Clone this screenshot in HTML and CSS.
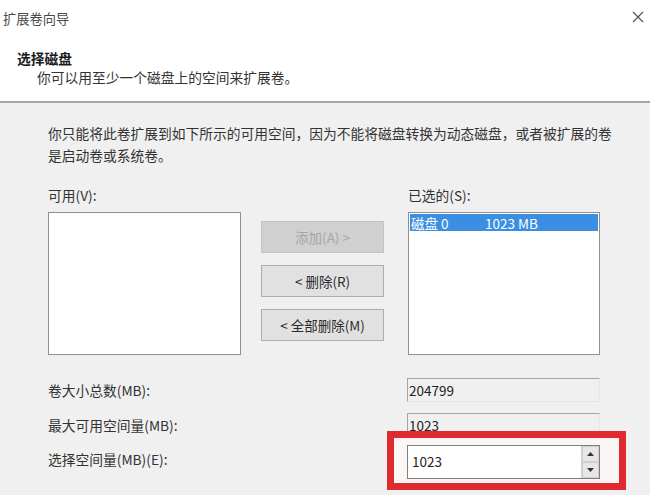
FILE: index.html
```html
<!DOCTYPE html>
<html lang="zh-CN">
<head>
<meta charset="utf-8">
<title>扩展卷向导</title>
<link rel="stylesheet" href="styles.css">
</head>
<body>
<div class="dialog">
  <div class="header">
    <div class="titlebar">
      <span class="title">扩展卷向导</span>
      <svg class="close" width="12" height="12" viewBox="0 0 12 12"><path d="M1 1 L11 11 M11 1 L1 11" stroke="#555" stroke-width="1.2" fill="none"/></svg>
    </div>
    <div class="heading">选择磁盘</div>
    <div class="subheading">你可以用至少一个磁盘上的空间来扩展卷。</div>
  </div>
  <div class="content">
    <p class="desc">你只能将此卷扩展到如下所示的可用空间，因为不能将磁盘转换为动态磁盘，或者被扩展的卷<br>是启动卷或系统卷。</p>
    <div class="lists">
      <div class="list-label">可用(V):</div>
      <div></div>
      <div class="list-label">已选的(S):</div>
      <div class="listbox"></div>
      <div class="buttons">
        <div class="btn disabled">添加(A) &gt;</div>
        <div class="btn">&lt; 删除(R)</div>
        <div class="btn">&lt; 全部删除(M)</div>
      </div>
      <div class="listbox">
        <div class="item selected"><span class="disk">磁盘 0</span><span class="size">1023 MB</span></div>
      </div>
    </div>
    <div class="fields">
      <div class="row">
        <span class="row-label">卷大小总数(MB):</span>
        <div class="ro-field">204799</div>
      </div>
      <div class="row">
        <span class="row-label">最大可用空间量(MB):</span>
        <div class="ro-field">1023</div>
      </div>
      <div class="row row-spin">
        <span class="row-label">选择空间量(MB)(E):</span>
        <div class="highlight">
          <div class="spin">
            <span class="spin-value">1023</span>
            <div class="spin-buttons">
              <div class="spin-btn"><svg width="7" height="4" viewBox="0 0 7 4"><path d="M0 4 L3.5 0 L7 4 Z" fill="#333"/></svg></div>
              <div class="spin-btn"><svg width="7" height="4" viewBox="0 0 7 4"><path d="M0 0 L3.5 4 L7 0 Z" fill="#333"/></svg></div>
            </div>
          </div>
        </div>
      </div>
    </div>
  </div>
</div>
</body>
</html>
```

FILE: styles.css
```css
* { box-sizing: border-box; }
html, body {
  margin: 0;
  padding: 0;
}
body {
  width: 650px;
  height: 495px;
  overflow: hidden;
  background: #f0f0f0;
  font-family: "Noto Sans CJK SC", "Liberation Sans", sans-serif;
  font-size: 13.75px;
  color: #2b2b2b;
}
.dialog {
  width: 650px;
  height: 495px;
  display: flex;
  flex-direction: column;
}
.header {
  background: #ffffff;
  height: 103px;
  border-bottom: 2px solid #a8a8a8;
  flex-shrink: 0;
}
.titlebar {
  height: 36px;
  display: flex;
  align-items: center;
  justify-content: space-between;
  padding: 0 6px 0 3px;
}
.title {
  color: #4a4a4a;
  font-size: 13.25px;
}
.close {
  display: block;
  margin-top: -2px;
}
.heading {
  margin-top: 13px;
  padding-left: 17px;
  line-height: 19px;
  font-weight: bold;
  color: #1a1a1a;
}
.subheading {
  padding-left: 37px;
  line-height: 19px;
  color: #333;
}
.content {
  padding-left: 48px;
}
.desc {
  margin: 19px 0 0 0;
  line-height: 22px;
  color: #333;
}
.lists {
  margin-top: 19px;
  display: grid;
  grid-template-columns: 193px 167px 192px;
  grid-template-rows: 20px 143px;
  row-gap: 7px;
}
.list-label {
  line-height: 20px;
  color: #333;
}
.listbox {
  background: #ffffff;
  border: 1px solid #8f8f8f;
  padding: 1px;
}
.buttons {
  padding: 9px 0 0 20px;
  display: flex;
  flex-direction: column;
  gap: 12px;
}
.btn {
  width: 123px;
  height: 32px;
  background: #e1e1e1;
  border: 1px solid #adadad;
  display: flex;
  align-items: center;
  justify-content: center;
  color: #2b2b2b;
  font-size: 13.5px;
}
.btn.disabled {
  background: #d0d0d0;
  border-color: #c4c4c4;
  color: #a6a6a6;
}
.item {
  height: 17px;
  display: flex;
  align-items: center;
  font-size: 13.5px;
  padding-left: 1px;
}
.item.selected {
  background: #3b8fe3;
  color: #ffffff;
}
.disk {
  width: 74px;
}
.fields {
  margin-top: 17px;
  display: flex;
  flex-direction: column;
}
.row {
  display: grid;
  grid-template-columns: 359px 193px;
  height: 35px;
  align-items: center;
}
.row-label {
  color: #333;
}
.ro-field {
  height: 24px;
  border-top: 1px solid #a3a3a3;
  border-left: 1px solid #a3a3a3;
  border-right: 1px solid #e6e6e6;
  border-bottom: 1px solid #e6e6e6;
  background: #f0f0f0;
  padding-left: 1px;
  line-height: 22px;
  font-size: 13.5px;
  color: #222;
}
.row-spin {
  align-items: start;
}
.row-spin .row-label {
  line-height: 35px;
}
.highlight {
  position: relative;
  z-index: 0;
  margin-top: 3px;
}
.highlight::before {
  content: "";
  position: absolute;
  left: -20px;
  top: -14px;
  right: -26px;
  bottom: -11px;
  border: 7px solid #df2a2f;
  background: #fbf6f6;
  z-index: -1;
}
.spin {
  height: 34px;
  background: #ffffff;
  border: 1px solid #7f7f7f;
  display: flex;
  align-items: stretch;
}
.spin-value {
  flex: 1;
  padding-left: 4px;
  line-height: 30px;
  font-size: 13.5px;
  color: #222;
}
.spin-buttons {
  width: 18px;
  display: flex;
  flex-direction: column;
  border-left: 1px solid #d0d0d0;
}
.spin-btn {
  flex: 1;
  background: #e6e6e6;
  border: 1px solid #cfcfcf;
  display: flex;
  align-items: center;
  justify-content: center;
}
```
